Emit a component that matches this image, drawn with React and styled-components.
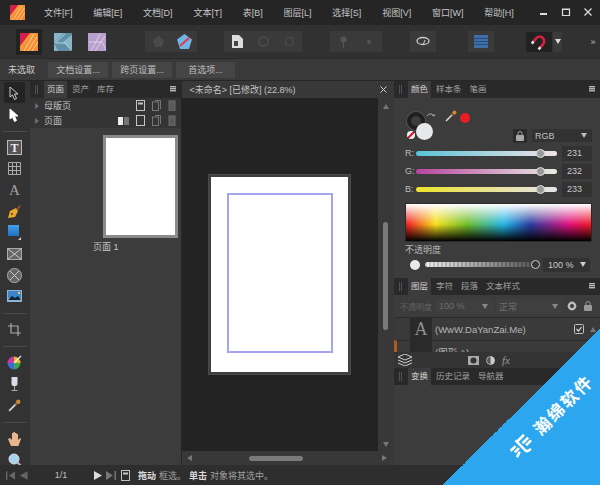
import React from 'react';
import styled, { createGlobalStyle } from 'styled-components';

const Global = createGlobalStyle`
  html, body { margin: 0; padding: 0; background: #2b2b2b; }
  * { box-sizing: border-box; }
`;

const menus = ['文件[F]', '编辑[E]', '文档[D]', '文本[T]', '表[B]', '图层[L]', '选择[S]', '视图[V]', '窗口[W]', '帮助[H]'];

const Shell = styled.div`
  position: relative;
  width: 600px;
  height: 485px;
  overflow: hidden;
  display: flex;
  flex-direction: column;
  background: #2b2b2b;
  color: #bdbdbd;
  font-family: "Liberation Sans", "Noto Sans CJK SC", sans-serif;
  font-size: 9px;
`;

const MenuBar = styled.div`
  height: 25px;
  display: flex;
  align-items: center;
  padding: 0 6px 0 10px;
  background: #252525;
`;
const MenuList = styled.div`
  display: flex;
  gap: 20.8px;
  margin-left: 19px;
  color: #c4c4c4;
  flex: 1;
`;
const WinButtons = styled.div`
  display: flex;
  align-items: center;
  gap: 11px;
`;

const ToolBar = styled.div`
  height: 34px;
  display: flex;
  align-items: center;
  padding-left: 16px;
  background: #313131;
  border-bottom: 1px solid #282828;
`;
const ToolBtn = styled.div`
  width: ${p => p.$w || 26}px;
  height: ${p => p.$h || 21}px;
  margin-left: ${p => p.$ml || 0}px;
  display: flex;
  align-items: center;
  justify-content: center;
  background: ${p => p.$bg || '#3a3a3a'};
  flex: none;
`;

const ContextBar = styled.div`
  height: 21px;
  display: flex;
  align-items: center;
  gap: 4px;
  padding-left: 8px;
  background: #393939;
`;
const ContextLabel = styled.span`
  width: 36px;
  color: #cccccc;
`;
const ContextBtn = styled.div`
  width: ${p => p.$w}px;
  height: 16px;
  line-height: 16px;
  text-align: center;
  background: #454545;
  color: #bdbdbd;
`;

const Main = styled.div`
  flex: 1;
  min-height: 0;
  display: flex;
  padding-top: 1px;
  background: #262626;
`;

const ToolColumn = styled.div`
  width: 30px;
  display: flex;
  flex-direction: column;
  align-items: center;
  padding-top: 1px;
  background: #333;
`;
const ToolSlot = styled.div`
  width: 21px;
  height: ${p => p.$h || 21.3}px;
  margin-top: ${p => p.$mt || 0}px;
  display: flex;
  align-items: center;
  justify-content: center;
  background: ${p => (p.$active ? '#232323' : 'transparent')};
  border-radius: 2px;
  flex: none;
`;
const ToolSep = styled.div`
  width: 24px;
  height: 1px;
  background: #4a4a4a;
  margin: ${p => p.$top || 5}px 0 5px;
  flex: none;
`;

const PanelHead = styled.div`
  height: 17px;
  display: flex;
  align-items: stretch;
  padding-left: 14px;
  background: #292929;
  position: relative;
  flex: none;
  font-size: 8.5px;
`;
const Tab = styled.div`
  padding: 0 3px;
  margin-right: 2px;
  line-height: 17px;
  background: ${p => (p.$active ? '#3c3c3c' : 'transparent')};
  color: ${p => (p.$active ? '#d4d4d4' : '#a0a0a0')};
`;
const Grip = styled.div`
  position: absolute;
  left: 5px;
  top: 4px;
  width: 3px;
  height: 9px;
  border-left: 1px solid #505050;
  border-right: 1px solid #505050;
`;
const MenuIcon = styled.div`
  position: absolute;
  right: 5px;
  top: 5px;
  width: 6px;
  height: 6px;
  background: repeating-linear-gradient(#b5b5b5 0 1px, #666 1px 2px);
`;

const PagesPanel = styled.div`
  width: 151px;
  display: flex;
  flex-direction: column;
  background: #3c3c3c;
`;
const PageRow = styled.div`
  height: 15px;
  display: flex;
  align-items: center;
  padding-left: 5px;
  background: #343434;
  color: #c0c0c0;
  gap: 5px;
  flex: none;
`;
const RowName = styled.span`
  flex: 1;
`;
const RowIcons = styled.div`
  display: flex;
  gap: 7px;
  padding-right: 5px;
  align-items: center;
`;
const Caret = styled.div`
  width: 0;
  height: 0;
  border-left: 4px solid #6a6a6a;
  border-top: 3px solid transparent;
  border-bottom: 3px solid transparent;
`;
const Thumb = styled.div`
  width: 75px;
  height: 103px;
  margin: 7px 3px 0 auto;
  background: #fff;
  border: 3px solid #8b8b8b;
  flex: none;
`;
const ThumbLabel = styled.div`
  margin: 2px 0 0 63px;
  line-height: 14px;
  color: #c6c6c6;
`;

const DocPanel = styled.div`
  width: 213px;
  margin-left: 1px;
  display: flex;
  flex-direction: column;
`;
const DocTitle = styled.div`
  height: 17px;
  display: flex;
  justify-content: space-between;
  align-items: center;
  padding: 0 7px 0 8px;
  background: #383838;
  color: #c4c4c4;
  flex: none;
`;
const DocBody = styled.div`
  flex: 1;
  min-height: 0;
  display: flex;
`;
const Canvas = styled.div`
  flex: 1;
  display: flex;
  align-items: center;
  justify-content: center;
  background: #232323;
`;
const PageSheet = styled.div`
  width: 141px;
  height: 199px;
  padding: 16px 15px 19px 16px;
  background: #fff;
  border: 2px solid #3f3f3f;
  outline: 1px solid #4a4a4a;
  display: flex;
`;
const Margins = styled.div`
  flex: 1;
  border: 2px solid #a4a4f0;
`;
const VScroll = styled.div`
  width: 16px;
  background: #383838;
  display: flex;
  flex-direction: column;
  align-items: center;
  justify-content: space-between;
  padding: 6px 0 4px;
`;
const VThumb = styled.div`
  width: 5px;
  height: 108px;
  border-radius: 3px;
  background: #7a7a7a;
`;
const HScroll = styled.div`
  height: 14px;
  padding: 0 7px 0 5px;
  background: #383838;
  display: flex;
  align-items: center;
  justify-content: space-between;
  flex: none;
`;
const HThumb = styled.div`
  width: 54px;
  height: 5px;
  border-radius: 3px;
  background: #7a7a7a;
  margin-right: 22px;
`;
const Tri = styled.div`
  width: 0;
  height: 0;
  flex: none;
  border-style: solid;
  border-color: transparent;
  border-width: ${p => (p.$dir === 'up' || p.$dir === 'down' ? '0 3.5px' : '3.5px 0')};
  ${p => p.$dir === 'up' && `border-bottom: 5px solid ${p.$c || '#777'};`}
  ${p => p.$dir === 'down' && `border-top: 5px solid ${p.$c || '#777'};`}
  ${p => p.$dir === 'left' && `border-right: 5px solid ${p.$c || '#777'};`}
  ${p => p.$dir === 'right' && `border-left: 5px solid ${p.$c || '#777'};`}
`;

const RightColumn = styled.div`
  width: 206px;
  display: flex;
  flex-direction: column;
  background: #3c3c3c;
`;
const ColourBody = styled.div`
  height: 180px;
  padding: 13px 8px 0 11px;
  display: flex;
  flex-direction: column;
  flex: none;
`;
const SwatchRow = styled.div`
  height: 33px;
  position: relative;
  display: flex;
  align-items: flex-start;
  flex: none;
`;
const Ring = styled.div`
  width: 18px;
  height: 18px;
  border-radius: 50%;
  border: 4px solid #1f1f1f;
  box-shadow: 0 0 0 1px #555;
  margin: 1px 0 0 2px;
`;
const FillDot = styled.div`
  position: absolute;
  left: 11px;
  top: 12px;
  width: 17px;
  height: 17px;
  border-radius: 50%;
  background: #e7e8e9;
`;
const NoneDot = styled.div`
  position: absolute;
  left: 2px;
  top: 20px;
  width: 8px;
  height: 8px;
  border-radius: 50%;
  background: linear-gradient(135deg, #eee 38%, #d23 38% 62%, #eee 62%);
`;
const DropperWrap = styled.span`
  margin: -1px 0 0 9px;
`;
const RedDot = styled.div`
  width: 10px;
  height: 10px;
  border-radius: 50%;
  background: #ea1c24;
  margin: 2px 0 0 3px;
`;
const Mode = styled.div`
  position: absolute;
  right: 0;
  top: 18px;
  display: flex;
  gap: 5px;
`;
const LockBox = styled.div`
  width: 14px;
  height: 14px;
  background: #2b2b2b;
  display: flex;
  align-items: center;
  justify-content: center;
`;
const SelectBox = styled.div`
  width: ${p => p.$w || 60}px;
  height: ${p => p.$h || 13}px;
  background: ${p => p.$bg || '#323232'};
  display: flex;
  align-items: center;
  justify-content: space-between;
  padding: 0 5px 0 3px;
  color: ${p => p.$c || '#c0c0c0'};
  flex: none;
`;
const SliderRow = styled.div`
  height: 18px;
  display: flex;
  align-items: center;
  flex: none;
`;
const SliderName = styled.span`
  width: 11px;
  color: #bdbdbd;
`;
const Track = styled.div`
  position: relative;
  width: 141px;
  height: 5px;
  border-radius: 3px;
  background: ${p => p.$bg};
`;
const Knob = styled.div`
  position: absolute;
  left: 120.5px;
  top: -2px;
  width: 9px;
  height: 9px;
  border-radius: 50%;
  background: #999;
  border: 1.5px solid #ddd;
`;
const NumBox = styled.div`
  width: 30px;
  height: 15px;
  margin-left: 5px;
  padding-left: 5px;
  line-height: 15px;
  background: #323232;
  color: #c8c8c8;
`;
const Spectrum = styled.div`
  height: 39px;
  margin-top: 5px;
  flex: none;
  border: 1px solid #2a2a2a;
  background:
    linear-gradient(#fff 0%, rgba(255,255,255,0) 55%, rgba(0,0,0,0) 55%, #000 100%),
    linear-gradient(90deg, #ef1c24 0%, #f7e01c 16%, #6fbe2c 33%, #22b5e8 53%, #2a3f9f 67%, #e0107f 88%, #ef1c24 100%);
`;
const OpacityLabel = styled.div`
  margin-top: 2px;
  height: 12px;
  line-height: 12px;
  color: #b5b5b5;
  flex: none;
`;
const OpacityRow = styled.div`
  display: flex;
  align-items: center;
  height: 15px;
  margin-top: 1px;
  padding-left: 5px;
  flex: none;
`;
const OpacityDot = styled.div`
  width: 10px;
  height: 10px;
  border-radius: 50%;
  background: #e7e8e9;
  flex: none;
`;
const OpacityTrack = styled.div`
  position: relative;
  width: 110px;
  height: 5px;
  margin-left: 5px;
  border-radius: 3px;
  background:
    repeating-linear-gradient(90deg, rgba(0,0,0,.14) 0 2px, rgba(255,255,255,.05) 2px 4px),
    linear-gradient(90deg, #eee, #4b4b4b);
`;
const OpacityKnob = styled.div`
  position: absolute;
  right: -5px;
  top: -2px;
  width: 9px;
  height: 9px;
  border-radius: 50%;
  background: #333;
  border: 1px solid #ccc;
`;
const OpacityValue = styled.div`
  width: 47px;
  height: 14px;
  margin-left: 8px;
  background: #323232;
  color: #cacaca;
  display: flex;
  align-items: center;
  justify-content: space-between;
  padding: 0 4px 0 5px;
`;

const LayersControls = styled.div`
  height: 22px;
  display: flex;
  align-items: center;
  padding-left: 6px;
  flex: none;
  color: #636363;
`;
const ControlLabel = styled.span`
  width: 36px;
  font-size: 8px;
  white-space: nowrap;
  flex: none;
`;
const ControlGap = styled.div`
  width: ${p => p.$w}px;
  flex: none;
`;
const LayerStack = styled.div`
  height: 35px;
  overflow: hidden;
  flex: none;
`;
const LayerRow = styled.div`
  height: 23px;
  display: flex;
  align-items: center;
  border-top: 1px solid #2b2b2b;
  padding: 0 4px 0 ${p => (p.$mark ? 13 : 16)}px;
  ${p => p.$mark && 'border-left: 3px solid #b05a1e;'}
  font-size: 9.5px;
  color: #b5b5b5;
  background: #3a3a3a;
  flex: none;
`;
const LayerThumb = styled.div`
  width: 22px;
  height: 22px;
  margin-right: 3px;
  background: #2a2a2a;
  font-family: "Liberation Serif", serif;
  font-size: 18px;
  line-height: 22px;
  text-align: center;
  color: #8f8f8f;
  flex: none;
`;
const CheckWrap = styled.span`
  margin-right: 6px;
  display: flex;
`;
const LayerBar = styled.div`
  height: 16px;
  padding-left: 4px;
  display: flex;
  align-items: center;
  background: #343434;
  flex: none;
`;
const LayerBarIcons = styled.div`
  display: flex;
  align-items: center;
  gap: 7px;
  margin-left: 56px;
  color: #aaa;
`;
const Fx = styled.span`
  font-family: "Liberation Serif", serif;
  font-style: italic;
  font-size: 11px;
  color: #999;
`;
const TransformBody = styled.div`
  flex: 1;
  background: #3c3c3c;
`;

const StatusBar = styled.div`
  height: 20px;
  display: flex;
  align-items: center;
  padding-left: 6px;
  background: #2e2e2e;
  flex: none;
`;
const StatusGroup = styled.div`
  display: flex;
  align-items: center;
  gap: ${p => p.$gap || 6}px;
  width: ${p => p.$w}px;
  flex: none;
`;
const PageCount = styled.span`
  width: 66px;
  text-align: center;
  color: #c0c0c0;
`;
const Strong = styled.b`
  color: #dcdcdc;
  margin-right: 3px;
`;
const Hint = styled.span`
  color: #a0a0a0;
  margin-right: 3px;
`;

const Ribbon = styled.div`
  position: absolute;
  right: 0;
  bottom: 0;
  width: 157px;
  height: 157px;
  background: linear-gradient(to bottom right, transparent 50%, #2ba6ef 50%);
`;
const RibbonMark = styled.div`
  position: absolute;
  left: 70px;
  top: 113px;
  display: flex;
  align-items: center;
  gap: 8px;
  transform: rotate(-45deg);
  transform-origin: left center;
  color: #fff;
  font-size: 17px;
  font-weight: 700;
  letter-spacing: 2px;
  white-space: nowrap;
  font-family: "Noto Sans CJK SC", sans-serif;
`;

// little drawn icons
const DesignerLogo = ({ size }) => (
  <svg width={size} height={size} viewBox="0 0 18 18">
    <defs>
      <linearGradient id="dlg" x1="0" y1="0" x2="1" y2="1">
        <stop offset="0" stopColor="#f7a23b" />
        <stop offset="1" stopColor="#f5842f" />
      </linearGradient>
    </defs>
    <rect width="18" height="18" fill="url(#dlg)" />
    <path d="M0 0h10L0 13z" fill="#d41f4c" />
    <path d="M4 18L14 1M8 18L17 4M12 18l6-9" stroke="#ffd9a8" strokeWidth="0.9" fill="none" />
  </svg>
);
const PhotoLogo = () => (
  <svg width="18" height="18" viewBox="0 0 18 18">
    <rect width="18" height="18" fill="#86b6c8" />
    <path d="M0 10L10 0h8v2L9 9l9 8v1H4z" fill="#5f90a5" />
    <path d="M1 10L11 1M2 10h9l6 7" stroke="#cbe3ec" strokeWidth="0.8" fill="none" />
  </svg>
);
const PublisherLogo = () => (
  <svg width="18" height="18" viewBox="0 0 18 18">
    <rect width="18" height="18" fill="#b9a0cc" />
    <path d="M3 18L12 1M7 18L17 3M1 9h13l4 8" stroke="#e2d3ea" strokeWidth="0.9" fill="none" />
  </svg>
);
const Cursor = ({ fill = 'none', stroke = '#ccc' }) => (
  <svg width="11" height="14" viewBox="0 0 11 14">
    <path d="M1 1l8 7H5.5l2 4.5-2 1-2-4.5L1 11z" fill={fill} stroke={stroke} strokeWidth="1" />
  </svg>
);
const PageIcon = ({ filled, stacked }) => (
  <svg width="9" height="11" viewBox="0 0 9 11">
    {stacked && <path d="M3 .5h5.5V9" stroke="#777" fill="none" />}
    <rect x=".5" y={stacked ? 2 : 0.5} width={stacked ? 6 : 8} height={stacked ? 8.5 : 10} fill="none" stroke={stacked ? '#777' : '#c4c4c4'} />
    {filled && <rect x="2" y="2.5" width="5" height="2" fill="#c4c4c4" />}
  </svg>
);
const Bin = () => (
  <svg width="8" height="11" viewBox="0 0 8 11">
    <path d="M1 2h6v9H1zM0 1h8M3 0h2" stroke="#6b6b6b" fill="#5a5a5a" strokeWidth="1" />
  </svg>
);
const Check = () => (
  <svg width="10" height="10" viewBox="0 0 10 10">
    <rect x=".5" y=".5" width="9" height="9" rx="1" fill="none" stroke="#c0c0c0" />
    <path d="M2.5 5l2 2 3-4" stroke="#d8d8d8" fill="none" strokeWidth="1.2" />
  </svg>
);
const Lock = ({ c = '#a8a8a8' }) => (
  <svg width="8" height="10" viewBox="0 0 8 10">
    <rect x="0" y="4" width="8" height="6" rx="1" fill={c} />
    <path d="M2 4V2.5a2 2 0 0 1 4 0V4" fill="none" stroke={c} />
  </svg>
);
const Dropper = ({ w = 12 }) => (
  <svg width={w} height={w} viewBox="0 0 12 12">
    <path d="M1 11l6-6" stroke="#d5d5d5" strokeWidth="1.6" />
    <path d="M6 4l2-2 2 2-2 2z" fill="#8a5a22" />
    <circle cx="9.5" cy="2.5" r="2" fill="#c98a32" />
  </svg>
);
const Nav = ({ dir, bar, c = '#8a8a8a' }) => (
  <svg width={bar ? 10 : 8} height="9" viewBox={`0 0 ${bar ? 10 : 8} 9`}>
    {dir === 'left'
      ? <path d={bar ? 'M0 0h1.5v9H0zM10 0v9L3 4.5z' : 'M8 0v9L0 4.5z'} fill={c} />
      : <path d={bar ? 'M0 0v9l7-4.5zM8.5 0H10v9H8.5z' : 'M0 0v9l8-4.5z'} fill={c} />}
  </svg>
);

const Win = {
  Min: () => <svg width="11" height="11"><rect x="1" y="6" width="7" height="2" fill="#ddd" /></svg>,
  Max: () => <svg width="11" height="11"><path d="M1.5 2.5h7v6h-7zM1 2h8" fill="none" stroke="#ddd" strokeWidth="1.2" /></svg>,
  Close: () => <svg width="11" height="11"><path d="M1.5 1.5l7 7M8.5 1.5l-7 7" stroke="#ddd" strokeWidth="1.2" /></svg>,
};

const tools = [
  <svg width="15" height="15"><rect x=".5" y=".5" width="14" height="14" fill="#555" stroke="#bbb" /><text x="7.5" y="12" fill="#eee" fontSize="12" fontWeight="700" fontFamily="Liberation Serif" textAnchor="middle">T</text></svg>,
  <svg width="13" height="13"><path d="M.5.5h12v12H.5zM.5 4.5h12M.5 8.5h12M4.5.5v12M8.5.5v12" fill="none" stroke="#aaa" /></svg>,
  <svg width="17" height="18"><text x="8.5" y="14" fill="#a4a4a4" fontSize="15" fontFamily="Liberation Serif" textAnchor="middle">A</text></svg>,
  <svg width="15" height="15"><path d="M1 14l2-7 6-3 2 3-3 6z" fill="#e9a92c" /><path d="M10 4l3-3 1 1-3 4z" fill="#9a4b3c" /><circle cx="5" cy="10" r="1" fill="#5a3a10" /></svg>,
  <svg width="15" height="15"><defs><linearGradient id="rb" x1="0" y1="0" x2="0" y2="1"><stop offset="0" stopColor="#44a2ec" /><stop offset="1" stopColor="#1e6fc0" /></linearGradient></defs><rect x="1" width="11" height="11" fill="url(#rb)" /><path d="M14 12v3h-3z" fill="#ccc" /></svg>,
  <svg width="15" height="12"><rect x=".5" y=".5" width="14" height="11" fill="#666" stroke="#aaa" /><path d="M.5.5l14 11M14.5.5l-14 11" stroke="#ccc" /></svg>,
  <svg width="15" height="15"><circle cx="7.5" cy="7.5" r="7" fill="#666" stroke="#aaa" /><path d="M3 3l9 9M12 3l-9 9" stroke="#ccc" /></svg>,
  <svg width="15" height="12"><rect width="15" height="12" fill="#8fb3d2" /><rect x="1" y="1" width="13" height="7" fill="#3b86cb" /><path d="M1 10l4-4 3 2 3-2 3 4z" fill="#123" /><circle cx="12" cy="3" r="1.2" fill="#f3c94b" /></svg>,
];
const tools2 = [
  <svg width="15" height="15" viewBox="0 0 15 15"><path d="M7 8V1.5A6.5 6.5 0 0 1 13.5 8z" fill="#e4c026" /><path d="M7 8h6.5A6.5 6.5 0 0 1 7 14.5z" fill="#3aa653" /><path d="M7 8v6.5A6.5 6.5 0 0 1 .5 8z" fill="#3b6fd4" /><path d="M7 8H.5A6.5 6.5 0 0 1 7 1.5z" fill="#c83a9a" /><path d="M7 8l7-7" stroke="#eee" strokeWidth="1.3" /></svg>,
  <svg width="9" height="14" viewBox="0 0 9 14"><path d="M1.5 0h6v7a3 2 0 0 1-6 0z" fill="#d8dbe8" /><path d="M4.5 9v4M1.5 13.5h6" stroke="#aaa" /></svg>,
  <Dropper w={13} />,
];

const App = () => (
  <Shell>
    <Global />
    <MenuBar>
      <DesignerLogo size={15} />
      <MenuList>
        {menus.map(m => <span key={m}>{m}</span>)}
      </MenuList>
      <WinButtons>
        <Win.Min />
        <Win.Max />
        <Win.Close />
      </WinButtons>
    </MenuBar>

    <ToolBar>
      <ToolBtn $bg="#222" $h={26}><DesignerLogo size={18} /></ToolBtn>
      <ToolBtn $bg="transparent" $ml={8}><PhotoLogo /></ToolBtn>
      <ToolBtn $bg="transparent" $ml={8}><PublisherLogo /></ToolBtn>
      <ToolBtn $ml={35}><svg width="11" height="11"><path d="M5.5 0L11 4.5 9 11H2L0 4.5z" fill="#4a4a4a" /></svg></ToolBtn>
      <ToolBtn><svg width="15" height="15"><path d="M7.5 0L15 5.5 12 15H3L0 5.5z" fill="#6fb6e6" /><path d="M3 12L12 4" stroke="#e23a4a" strokeWidth="2" /></svg></ToolBtn>
      <ToolBtn $ml={27}><svg width="13" height="13"><path d="M1 0h7l4 4v9H1z" fill="#ddd" /><path d="M3 6h4v5H3z" fill="#444" /></svg></ToolBtn>
      <ToolBtn><svg width="11" height="11"><circle cx="5.5" cy="5.5" r="4.5" fill="none" stroke="#4c4c4c" strokeWidth="1.5" /></svg></ToolBtn>
      <ToolBtn><svg width="9" height="9"><rect x="1" y="1" width="7" height="7" fill="none" stroke="#4c4c4c" /></svg></ToolBtn>
      <ToolBtn $ml={28}><svg width="9" height="12"><circle cx="4.5" cy="3.5" r="3" fill="#555" /><path d="M4.5 6v6" stroke="#555" /></svg></ToolBtn>
      <ToolBtn><svg width="6" height="6"><circle cx="3" cy="3" r="2" fill="#555" /></svg></ToolBtn>
      <ToolBtn $ml={28}><svg width="14" height="11"><ellipse cx="7" cy="5" rx="6" ry="3.5" fill="none" stroke="#ccc" strokeWidth="1.3" /><path d="M7 9l2-5" stroke="#ccc" /></svg></ToolBtn>
      <ToolBtn $ml={32}><svg width="14" height="13"><rect width="14" height="13" fill="#3f6ea8" /><path d="M0 3.5h14M0 6.5h14M0 9.5h14" stroke="#2a4d78" /></svg></ToolBtn>
      <ToolBtn $ml={32} $bg="#222" $h={20}>
        <svg width="16" height="16" viewBox="0 0 16 16">
          <g transform="rotate(40 8 8)">
            <path d="M3.5 11V7a4.5 4.5 0 0 1 9 0v4" fill="none" stroke="#d9243f" strokeWidth="2.6" />
            <path d="M3.5 11v3M12.5 11v3" stroke="#e4e4e4" strokeWidth="2.6" />
          </g>
        </svg>
      </ToolBtn>
      <ToolBtn $ml={1} $w={9} $h={20}><Tri $dir="down" $c="#ddd" /></ToolBtn>
      <ToolBtn $ml={25} $w={12} $bg="transparent">»</ToolBtn>
    </ToolBar>

    <ContextBar>
      <ContextLabel>未选取</ContextLabel>
      <ContextBtn $w={60}>文档设置...</ContextBtn>
      <ContextBtn $w={60}>跨页设置...</ContextBtn>
      <ContextBtn $w={59}>首选项...</ContextBtn>
    </ContextBar>

    <Main>
      <ToolColumn>
        <ToolSlot $active><Cursor /></ToolSlot>
        <ToolSlot $mt={1}><Cursor fill="#fff" stroke="#fff" /></ToolSlot>
        <ToolSep />
        {tools.map((t, i) => <ToolSlot key={i}>{t}</ToolSlot>)}
        <ToolSep $top={6} />
        <ToolSlot><svg width="13" height="13"><path d="M3 0v10h10M0 3h10v10" fill="none" stroke="#aaa" strokeWidth="1.2" /></svg></ToolSlot>
        <ToolSep $top={6} />
        {tools2.map((t, i) => <ToolSlot key={i}>{t}</ToolSlot>)}
        <ToolSep $top={6} />
        <ToolSlot><svg width="14" height="15" viewBox="0 0 14 15"><path d="M3 15L0 8l2-1 2 2V2h1.5v5-6H7v6-5h1.5v5-4H10v6l2-2 1 1-3 8z" fill="#e8b48e" /></svg></ToolSlot>
        <ToolSlot><svg width="14" height="14"><circle cx="6" cy="6" r="5" fill="#a9d3ee" stroke="#ddd" /><path d="M9.5 9.5l4 4" stroke="#bbb" strokeWidth="2" /></svg></ToolSlot>
      </ToolColumn>

      <PagesPanel>
        <PanelHead>
          <Grip />
          <Tab $active>页面</Tab>
          <Tab>资产</Tab>
          <Tab>库存</Tab>
          <MenuIcon />
        </PanelHead>
        <PageRow>
          <Caret />
          <RowName>母版页</RowName>
          <RowIcons>
            <PageIcon filled />
            <PageIcon stacked />
            <Bin />
          </RowIcons>
        </PageRow>
        <PageRow>
          <Caret />
          <RowName>页面</RowName>
          <RowIcons>
            <svg width="11" height="8"><rect width="5" height="8" fill="#eee" /><rect x="6" width="5" height="8" fill="#777" /></svg>
            <PageIcon />
            <PageIcon stacked />
            <Bin />
          </RowIcons>
        </PageRow>
        <Thumb />
        <ThumbLabel>页面 1</ThumbLabel>
      </PagesPanel>

      <DocPanel>
        <DocTitle>
          <span>&lt;未命名&gt; [已修改] (22.8%)</span>
          <svg width="7" height="7"><path d="M.5.5l6 6M6.5.5l-6 6" stroke="#ccc" /></svg>
        </DocTitle>
        <DocBody>
          <Canvas>
            <PageSheet><Margins /></PageSheet>
          </Canvas>
          <VScroll>
            <Tri $dir="up" />
            <VThumb />
            <Tri $dir="down" />
          </VScroll>
        </DocBody>
        <HScroll>
          <Tri $dir="left" />
          <HThumb />
          <Tri $dir="right" />
        </HScroll>
      </DocPanel>

      <RightColumn>
        <PanelHead>
          <Grip />
          <Tab $active>颜色</Tab>
          <Tab>样本条</Tab>
          <Tab>笔画</Tab>
          <MenuIcon />
        </PanelHead>
        <ColourBody>
          <SwatchRow>
            <Ring />
            <FillDot />
            <NoneDot />
            <svg width="11" height="10"><path d="M2 5a4 4 0 0 1 7 0M9 5l1-2M9 5L7 4" fill="none" stroke="#aaa" /></svg>
            <DropperWrap><Dropper /></DropperWrap>
            <RedDot />
            <Mode>
              <LockBox><Lock /></LockBox>
              <SelectBox $w={60} $h={13}>RGB<Tri $dir="down" $c="#bbb" /></SelectBox>
            </Mode>
          </SwatchRow>
          <SliderRow>
            <SliderName>R:</SliderName>
            <Track $bg="linear-gradient(90deg, #58c3d6, #f3e3e6)"><Knob /></Track>
            <NumBox>231</NumBox>
          </SliderRow>
          <SliderRow>
            <SliderName>G:</SliderName>
            <Track $bg="linear-gradient(90deg, #b9459f, #e9ece4)"><Knob /></Track>
            <NumBox>232</NumBox>
          </SliderRow>
          <SliderRow>
            <SliderName>B:</SliderName>
            <Track $bg="linear-gradient(90deg, #ede22a, #e4e4ee)"><Knob /></Track>
            <NumBox>233</NumBox>
          </SliderRow>
          <Spectrum />
          <OpacityLabel>不透明度</OpacityLabel>
          <OpacityRow>
            <OpacityDot />
            <OpacityTrack><OpacityKnob /></OpacityTrack>
            <OpacityValue>100 %<Tri $dir="down" $c="#ccc" /></OpacityValue>
          </OpacityRow>
        </ColourBody>

        <PanelHead>
          <Grip />
          <Tab $active>图层</Tab>
          <Tab>字符</Tab>
          <Tab>段落</Tab>
          <Tab>文本样式</Tab>
          <MenuIcon />
        </PanelHead>
        <LayersControls>
          <ControlLabel>不透明度</ControlLabel>
          <SelectBox $w={57} $h={15} $bg="#3f3f3f" $c="#6e6e6e">100 %<Tri $dir="down" $c="#888" /></SelectBox>
          <ControlGap $w={3} />
          <SelectBox $w={67} $h={15} $bg="#3f3f3f" $c="#6e6e6e">正常<Tri $dir="down" $c="#888" /></SelectBox>
          <ControlGap $w={4} />
          <svg width="10" height="10"><circle cx="5" cy="5" r="3.2" fill="none" stroke="#bbb" strokeWidth="2.4" /></svg>
          <ControlGap $w={7} />
          <Lock c="#999" />
        </LayersControls>
        <LayerStack>
          <LayerRow>
            <LayerThumb>A</LayerThumb>
            <RowName>(WwW.DaYanZai.Me)</RowName>
            <CheckWrap><Check /></CheckWrap>
            <Tri $dir="up" />
          </LayerRow>
          <LayerRow $mark>
            <LayerThumb />
            <RowName>(图形 A)</RowName>
          </LayerRow>
        </LayerStack>
        <LayerBar>
          <svg width="14" height="12"><path d="M7 0l7 3-7 3-7-3zM0 6l7 3 7-3M0 9l7 3 7-3" fill="none" stroke="#ccc" /></svg>
          <LayerBarIcons>
            <svg width="11" height="9"><rect width="11" height="9" fill="#aaa" /><ellipse cx="5.5" cy="4.5" rx="3" ry="3" fill="#333" /></svg>
            <svg width="9" height="9"><circle cx="4.5" cy="4.5" r="4" fill="#555" stroke="#aaa" /><path d="M4.5.5a4 4 0 0 1 0 8z" fill="#ccc" /></svg>
            <Fx>fx</Fx>
          </LayerBarIcons>
        </LayerBar>
        <PanelHead>
          <Grip />
          <Tab $active>变换</Tab>
          <Tab>历史记录</Tab>
          <Tab>导航器</Tab>
        </PanelHead>
        <TransformBody />
      </RightColumn>
    </Main>

    <StatusBar>
      <StatusGroup $w={22} $gap={5}>
        <Nav dir="left" bar c="#666" />
        <Nav dir="left" c="#666" />
      </StatusGroup>
      <PageCount>1/1</PageCount>
      <StatusGroup $w={27} $gap={4}>
        <Nav dir="right" c="#ddd" />
        <Nav dir="right" bar c="#777" />
      </StatusGroup>
      <StatusGroup $w={17}><PageIcon filled /></StatusGroup>
      <Strong>拖动</Strong>
      <Hint>框选。</Hint>
      <Strong>单击</Strong>
      <Hint>对象将其选中。</Hint>
    </StatusBar>

    <Ribbon>
      <RibbonMark>
        <svg width="24" height="20" viewBox="0 0 24 20">
          <path d="M0 6h7M2 10h6M0 15l6-2M11 2v14c0 2 2 3 5 3M11 4h10M14 9h8M15 13h7" stroke="#fff" strokeWidth="2.6" fill="none" />
        </svg>
        瀚绵软件
      </RibbonMark>
    </Ribbon>
  </Shell>
);

export default App;
